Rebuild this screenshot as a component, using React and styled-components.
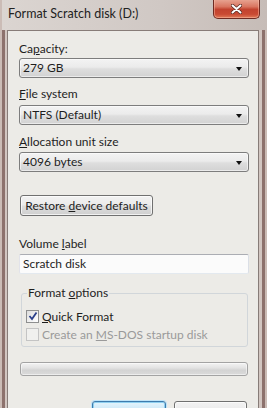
import styled, { createGlobalStyle } from 'styled-components'

const Global = createGlobalStyle`
    html, body {
        margin: 0;
        padding: 0;
        background: #cfc6c1;
    }
    * { box-sizing: border-box; }
`

const Window = styled.div`
    width: 267px;
    height: 408px;
    overflow: hidden;
    display: flex;
    flex-direction: column;
    font-family: Lato, "Open Sans", sans-serif;
    font-size: 12px;
    color: #1e1e1e;
    background:
        linear-gradient(to right, #cbbcb6 0 2px, #8d726d 2px 5px, #d2c6c1 5px 7px, transparent 7px),
        linear-gradient(to left, #cbbcb6 0 2px, #8d726d 2px 5px, #d2c6c1 5px 8px, transparent 8px),
        linear-gradient(to right, #d9d2ce, #cdc4bf 70%, #c2b7b2);
`

const TitleBar = styled.div`
    height: 30px;
    flex: none;
    display: flex;
    align-items: flex-start;
    justify-content: space-between;
    padding-left: 8px;
    padding-right: 7px;
    background: linear-gradient(to right, #dbd5d1, #d0c8c4 60%, #c6bcb7);
    border-left: 2px solid #cbbcb6;
`

const Title = styled.div`
    font-size: 12.5px;
    line-height: 15px;
    margin-top: 6px;
    margin-left: -2px;
    color: #222;
`

const CloseBtn = styled.div`
    width: 47px;
    height: 20px;
    margin-top: -1px;
    border: 1px solid #6f2b22;
    border-top: none;
    border-radius: 0 0 5px 5px;
    background: linear-gradient(#e9a896 0%, #d97661 40%, #c2432f 55%, #c94a33 80%, #e07a58 100%);
    box-shadow: inset 0 0 0 1px rgba(255, 200, 180, 0.45);
    display: flex;
    align-items: center;
    justify-content: center;
`

const Content = styled.div`
    flex: 1;
    margin: 0 8px 0 7px;
    border: 1px solid #877c78;
    border-bottom: none;
    background: #ecebe7;
    padding: 11px 9px 0 11px;
    display: flex;
    flex-direction: column;
`

const Label = styled.div`
    line-height: 14px;
    height: 14px;
    margin-top: ${p => p.$top || 0}px;
    margin-bottom: ${p => p.$gap || 3}px;
`

const Key = styled.span`
    text-decoration: underline;
    text-underline-offset: 1px;
`

const Combo = styled.div`
    height: 20px;
    border: 1px solid #7d7d7d;
    border-radius: 3px;
    background: linear-gradient(#f3f3f3 0%, #ebebeb 45%, #dedede 55%, #d2d2d2 100%);
    box-shadow: inset 0 0 0 1px rgba(255, 255, 255, 0.55);
    display: flex;
    align-items: center;
    justify-content: space-between;
    padding: 0 6px 0 3px;
    line-height: 18px;
`

const Arrow = styled.span`
    width: 0;
    height: 0;
    border-left: 3.5px solid transparent;
    border-right: 3.5px solid transparent;
    border-top: 4px solid #111;
    margin-top: 1px;
`

const Button = styled.div`
    width: ${p => p.$w}px;
    height: ${p => p.$h || 21}px;
    margin-top: ${p => p.$top || 0}px;
    margin-left: ${p => p.$left || 0}px;
    border: 1px solid ${p => (p.$primary ? '#3d7bad' : '#707070')};
    border-radius: 3px;
    background: ${p =>
        p.$primary
            ? 'linear-gradient(#e5f4fc 0%, #c4e5f6 50%, #98d1ef 51%, #6dbde4 100%)'
            : 'linear-gradient(#f2f2f2 0%, #ebebeb 48%, #dddddd 52%, #cfcfcf 100%)'};
    box-shadow: ${p =>
        p.$primary
            ? '0 0 0 1px #bfe3f7, inset 0 0 0 1px #8fd0f0'
            : 'inset 0 0 0 1px rgba(255, 255, 255, 0.7)'};
    text-align: center;
    flex: none;
    line-height: 19px;
`

const TextBox = styled.div`
    height: 20px;
    border: 1px solid #abadb3;
    border-color: #abadb3 #dbdfe6 #e3e9ef #e2e3ea;
    border-radius: 2px;
    background: #fbfbfb;
    padding: 0 3px;
    line-height: 18px;
`

const Group = styled.fieldset`
    margin: 12px 1px 0 2px;
    padding: 1px 5px 7px 4px;
    border: 1px solid #d1d6da;
    border-radius: 3px;
    height: 61px;
`

const Legend = styled.legend`
    padding: 0 1px;
    margin-left: 1px;
    line-height: 14px;
`

const CheckRow = styled.div`
    display: flex;
    align-items: center;
    gap: 3px;
    height: 18px;
    margin-top: ${p => p.$top || 0}px;
    color: ${p => (p.$disabled ? '#9a9a9a' : '#1e1e1e')};
`

const Box = styled.span`
    width: 13px;
    height: 13px;
    flex: none;
    border: 1px solid ${p => (p.$disabled ? '#c4c4c4' : '#8e8f8f')};
    background: ${p =>
        p.$disabled
            ? '#f0f0ee'
            : 'linear-gradient(135deg, #dcdcdc, #f6f6f6 70%, #ffffff)'};
    display: flex;
    align-items: center;
    justify-content: center;
`

const Progress = styled.div`
    height: 14px;
    margin: 15px 1px 0 1px;
    border: 1px solid #a3a3a3;
    border-radius: 3px;
    background: linear-gradient(#f3f3f3 0%, #e3e3e3 40%, #d3d3d3 60%, #dadada 100%);
    box-shadow: inset 0 0 0 1px rgba(255, 255, 255, 0.5);
`

const ButtonRow = styled.div`
    display: flex;
    justify-content: flex-end;
    gap: 8px;
    margin-top: 25px;
    padding-right: 2px;
`

const App = () => (
    <Window>
        <Global />
        <TitleBar>
            <Title>Format Scratch disk (D:)</Title>
            <CloseBtn>
                <svg width="11" height="10" viewBox="0 0 11 10">
                    <path d="M1.5 1.5 L9.5 8.5 M9.5 1.5 L1.5 8.5" stroke="#5a2a22" strokeWidth="3.6" strokeLinecap="round" />
                    <path d="M1.5 1.5 L9.5 8.5 M9.5 1.5 L1.5 8.5" stroke="#ffffff" strokeWidth="2" strokeLinecap="round" />
                </svg>
            </CloseBtn>
        </TitleBar>
        <Content>
            <Label $gap={2}>Ca<Key>p</Key>acity:</Label>
            <Combo><span>279 GB</span><Arrow /></Combo>
            <Label $top={9} $gap={4}><Key>F</Key>ile system</Label>
            <Combo><span>NTFS (Default)</span><Arrow /></Combo>
            <Label $top={10}><Key>A</Key>llocation unit size</Label>
            <Combo><span>4096 bytes</span><Arrow /></Combo>
            <Button $w={133} $top={23} $left={1}>Restore <Key>d</Key>evice defaults</Button>
            <Label $top={21}>Volume <Key>l</Key>abel</Label>
            <TextBox>Scratch disk</TextBox>
            <Group>
                <Legend>Format <Key>o</Key>ptions</Legend>
                <CheckRow $top={6}>
                    <Box>
                        <svg width="10" height="10" viewBox="0 0 10 10">
                            <path d="M1.5 5 L4 8 L8.5 1.5" fill="none" stroke="#2a3f8a" strokeWidth="1.8" />
                        </svg>
                    </Box>
                    <span><Key>Q</Key>uick Format</span>
                </CheckRow>
                <CheckRow $disabled>
                    <Box $disabled />
                    <span>Create an <Key>M</Key>S-DOS startup disk</span>
                </CheckRow>
            </Group>
            <Progress />
            <ButtonRow>
                <Button $w={74} $h={23} $primary aria-label="Start" />
                <Button $w={73} $h={23} aria-label="Close" />
            </ButtonRow>
        </Content>
    </Window>
)

export default App
